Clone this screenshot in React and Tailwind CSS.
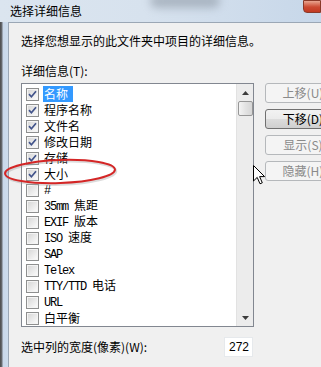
import React from "react";

const items = [
  { cjk: "名称", checked: true, selected: true },
  { cjk: "程序名称", checked: true },
  { cjk: "文件名", checked: true },
  { cjk: "修改日期", checked: true },
  { cjk: "存储", checked: true },
  { cjk: "大小", checked: true },
  { latin: "#" },
  { latin: "35mm ", cjk: "焦距" },
  { latin: "EXIF ", cjk: "版本" },
  { latin: "ISO ", cjk: "速度" },
  { latin: "SAP" },
  { latin: "Telex" },
  { latin: "TTY/TTD ", cjk: "电话" },
  { latin: "URL" },
  { cjk: "白平衡" },
];

const CheckBox = ({ checked }) => (
  <span className="w-[13px] h-[13px] border border-[#8e8f8f] bg-[#f4f4f4] p-[1px] flex shrink-0">
    <span className="relative flex-1 bg-gradient-to-br from-[#d8d8d8] to-[#fafafa]">
      {checked && (
        <svg className="absolute inset-0" width="9" height="9" viewBox="0 0 9 9">
          <path d="M1 4.2 L3.4 6.8 L8 1.2" fill="none" stroke="#41538a" strokeWidth="1.7" />
        </svg>
      )}
    </span>
  </span>
);

const Button = ({ label, enabled }) => (
  <div
    className={
      enabled
        ? "h-[20px] w-[76px] rounded-[3px] border border-[#707070] bg-[linear-gradient(#f2f2f2_0%,#ebebeb_50%,#dddddd_50%,#cfcfcf_100%)] text-black flex items-center justify-center"
        : "h-[20px] w-[76px] rounded-[3px] border border-[#b5b8bb] bg-[#f4f4f4] text-[#8a8a8a] flex items-center justify-center"
    }
  >
    {label}
  </div>
);

const Mono = ({ children }) => (
  <span className="font-['Liberation_Mono',monospace] text-[12px] tracking-[-1.2px] whitespace-pre">{children}</span>
);

export default function App() {
  return (
    <div className="relative w-[321px] h-[367px] overflow-hidden flex flex-col bg-[#f0f0f0] text-[12px] leading-[16px] text-black font-['Noto_Sans_CJK_SC',sans-serif]">
      {/* title bar */}
      <div className="relative h-[22px] shrink-0 flex items-center pl-[10px] bg-[linear-gradient(90deg,#dbe5ef_0%,#d7e2ee_45%,#c7d7e9_100%)]">
        <span>选择详细信息</span>
        <div className="absolute left-[150px] top-[-6px] w-[70px] h-[14px] rounded-full bg-[#8f9aa6] opacity-60 blur-[4px]" />
        <div className="absolute right-0 top-0 w-[18px] h-[13px] rounded-bl-[4px] border border-[#8a3a2a] bg-[linear-gradient(#e9a590,#cc4a32_55%,#c23a22)]" />
      </div>

      <div className="flex flex-1">
        {/* window frame */}
        <div className="w-[8px] shrink-0 bg-[linear-gradient(90deg,#4a4a4a_0px,#6c7076_2px,#c9d8ea_3px,#cddcec_8px)]" />

        {/* client area */}
        <div className="flex-1 border-l border-t border-[#9ba7b5] pl-[12px] flex flex-col">
          <p className="mt-[10px]">选择您想显示的此文件夹中项目的详细信息。</p>
          <p className="mt-[14px]">详细信息(T):</p>

          <div className="mt-[4px] flex items-start">
            {/* list */}
            <div className="w-[233px] h-[244px] border border-[#828790] bg-white flex">
              <div className="flex-1 pt-[2px] flex flex-col">
                {items.map((it, i) => (
                  <div key={i} className="h-[16px] flex items-center pl-[4px] gap-[5px] whitespace-nowrap">
                    <CheckBox checked={it.checked} />
                    <span className={it.selected ? "ml-[-1px] pl-[1px] pr-[5px] bg-[#3399ff] text-white" : ""}>
                      {it.latin && <Mono>{it.latin}</Mono>}
                      {it.cjk}
                    </span>
                  </div>
                ))}
              </div>
              {/* scrollbar */}
              <div className="w-[17px] shrink-0 flex flex-col items-center bg-[#ececec] border-l border-[#e2e2e2]">
                <div className="h-[17px] w-full flex items-center justify-center">
                  <svg width="7" height="4" viewBox="0 0 7 4">
                    <path d="M0 4 L3.5 0 L7 4 Z" fill="#3c3c3c" />
                  </svg>
                </div>
                <div className="w-[15px] h-[15px] rounded-[2px] border border-[#979797] bg-[linear-gradient(90deg,#f4f4f4,#e3e3e3_50%,#d6d6d6)]" />
                <div className="flex-1" />
                <div className="h-[17px] w-full flex items-center justify-center">
                  <svg width="7" height="4" viewBox="0 0 7 4">
                    <path d="M0 0 L7 0 L3.5 4 Z" fill="#3c3c3c" />
                  </svg>
                </div>
              </div>
            </div>

            {/* buttons */}
            <div className="ml-[11px] flex flex-col gap-[6px] shrink-0">
              <Button label="上移(U)" />
              <Button label="下移(D)" enabled />
              <Button label="显示(S)" />
              <Button label="隐藏(H)" />
            </div>
          </div>

          <div className="mt-[10px] w-[232px] flex items-center justify-between">
            <span>选中列的宽度(像素)(W):</span>
            <div className="w-[29px] h-[20px] bg-white border border-[#e6e9ec] flex items-center justify-end pr-[3px] font-['Liberation_Sans',sans-serif]">
              272
            </div>
          </div>
        </div>
      </div>

      {/* annotation ellipse */}
      <svg className="absolute left-0 top-[152px]" width="125" height="40" viewBox="0 0 125 40">
        <ellipse cx="61" cy="21" rx="55" ry="11.5" fill="none" stroke="#9a9a9a" strokeOpacity="0.35" strokeWidth="2.5" transform="rotate(-2 61 21)" />
        <ellipse cx="60" cy="19.5" rx="55" ry="11.5" fill="none" stroke="#d42626" strokeWidth="2" transform="rotate(-2 60 19.5)" />
      </svg>

      {/* mouse cursor */}
      <svg className="absolute left-[253px] top-[165px]" width="14" height="21" viewBox="0 0 14 21">
        <path d="M0.5 0.5 L0.5 16 L4.2 12.4 L7 18.8 L9.3 17.8 L6.6 11.6 L11.6 11.6 Z" fill="#ffffff" stroke="#000000" strokeWidth="1" strokeLinejoin="round" />
      </svg>
    </div>
  );
}
